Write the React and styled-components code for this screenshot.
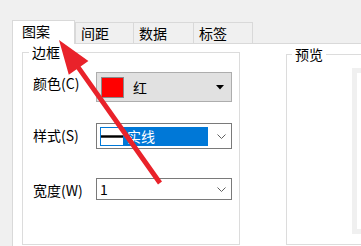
import React from 'react';
import styled, { createGlobalStyle } from 'styled-components';

// =============================================
// GLOBAL
// =============================================
const GlobalStyle = createGlobalStyle`
  html, body {
    margin: 0;
    padding: 0;
    background: #f0f0f0;
  }
  body {
    font-family: "Noto Sans CJK SC", "Liberation Sans", sans-serif;
    font-size: 14px;
    color: #000;
  }
`;

const TABS = [
  { label: '图案', width: 63, active: true },
  { label: '间距', width: 58 },
  { label: '数据', width: 60 },
  { label: '标签', width: 60, last: true },
];

const Chevron = () => (
  <svg width="9" height="5" viewBox="0 0 9 5">
    <polyline points="0.5,0.5 4.5,4.5 8.5,0.5" fill="none" stroke="#606060" strokeWidth="1" />
  </svg>
);

const DropTriangle = () => (
  <svg width="8" height="5" viewBox="0 0 8 5">
    <polygon points="0,0 8,0 4,4.5" fill="#000" />
  </svg>
);

const Arrow = () => (
  <ArrowLayer viewBox="0 0 361 246" width="361" height="246">
    <polygon
      points="59,40 88.4,60.9 80.6,66.4 162,181.6 158,184.4 76.6,69.2 68.8,74.7"
      fill="#e9222a"
    />
  </ArrowLayer>
);

const App = () => {
  return (
    <Window>
      <GlobalStyle />
      <TabStrip>
        {TABS.map((tab) => (
          <Tab key={tab.label} $w={tab.width} $active={tab.active} $last={tab.last}>
            {tab.label}
          </Tab>
        ))}
      </TabStrip>

      <Page>
        <Group $w={218} $h={200} $top={1}>
          <Legend $ml={6}>边框</Legend>
          <Form>
            <Row $mt={13}>
              <FieldLabel $pt={4}>颜色(C)</FieldLabel>
              <ColorCombo>
                <Swatch />
                <ComboText $ml={9}>红</ComboText>
                <ComboArrow $mr={7}>
                  <DropTriangle />
                </ComboArrow>
              </ColorCombo>
            </Row>

            <Row $mt={21}>
              <FieldLabel $pt={5}>样式(S)</FieldLabel>
              <Combo $h={26}>
                <Selection>
                  <LineSample>
                    <LineBar />
                  </LineSample>
                  <SelectionText>实线</SelectionText>
                </Selection>
                <ComboArrow $mr={5}>
                  <Chevron />
                </ComboArrow>
              </Combo>
            </Row>

            <Row $mt={29}>
              <FieldLabel $pt={5}>宽度(W)</FieldLabel>
              <Combo $h={22}>
                <ComboText $ml={3}>1</ComboText>
                <ComboArrow $mr={5}>
                  <Chevron />
                </ComboArrow>
              </Combo>
            </Row>
          </Form>
        </Group>

        <Group $w={140} $h={198} $top={3} $ml={46}>
          <Legend $ml={5}>预览</Legend>
          <PreviewFrame />
        </Group>
      </Page>

      <Arrow />
    </Window>
  );
};

export default App;

// =============================================
// STYLES
// =============================================
const Window = styled.div`
  position: relative;
  width: 361px;
  height: 246px;
  overflow: hidden;
  background: #f0f0f0;
  display: flex;
  flex-direction: column;
`;

const TabStrip = styled.div`
  display: flex;
  align-items: flex-end;
  height: 43px;
  padding-left: 12px;
  box-sizing: border-box;
  flex-shrink: 0;
`;

const Tab = styled.div`
  position: relative;
  z-index: ${(p) => (p.$active ? 2 : 1)};
  box-sizing: border-box;
  width: ${(p) => p.$w}px;
  height: ${(p) => (p.$active ? 24 : 21)}px;
  margin-bottom: ${(p) => (p.$active ? -1 : 0)}px;
  padding: 3px 0 0 ${(p) => (p.$active ? 9 : 5)}px;
  background: ${(p) => (p.$active ? '#fff' : '#f0f0f0')};
  border-top: 1px solid #d9d9d9;
  border-left: 1px solid #d9d9d9;
  border-right: ${(p) => (p.$active || p.$last ? '1px solid #d9d9d9' : 'none')};
  line-height: 14px;
  white-space: nowrap;
`;

const Page = styled.div`
  flex: 1;
  display: flex;
  align-items: flex-start;
  margin-left: 12px;
  padding-left: 9px;
  background: #fff;
  border-top: 1px solid #d9d9d9;
  border-left: 1px solid #d9d9d9;
  min-width: 0;
`;

const Group = styled.fieldset`
  box-sizing: border-box;
  flex-shrink: 0;
  width: ${(p) => p.$w}px;
  height: ${(p) => p.$h}px;
  margin: ${(p) => p.$top}px 0 0 ${(p) => p.$ml || 0}px;
  padding: 0;
  border: 1px solid #dcdcdc;
  min-inline-size: 0;
`;

const Legend = styled.legend`
  margin-left: ${(p) => p.$ml}px;
  padding: 0 3px;
  line-height: 14px;
  font-size: 14px;
`;

const Form = styled.div`
  padding-left: 10px;
`;

const Row = styled.div`
  display: grid;
  grid-template-columns: 63px 136px;
  align-items: start;
  margin-top: ${(p) => p.$mt}px;
`;

const FieldLabel = styled.div`
  padding-top: ${(p) => p.$pt}px;
  line-height: 14px;
  white-space: nowrap;
`;

const ColorCombo = styled.div`
  box-sizing: border-box;
  height: 30px;
  display: flex;
  align-items: center;
  padding-left: 4px;
  background: #e1e1e1;
  border: 1px solid #adadad;
`;

const Swatch = styled.div`
  box-sizing: border-box;
  width: 23px;
  height: 21px;
  background: #ff0000;
  border: 1px solid #8a8a8a;
`;

const Combo = styled.div`
  box-sizing: border-box;
  height: ${(p) => p.$h}px;
  display: flex;
  align-items: center;
  background: #fff;
  border: 1px solid #7a7a7a;
`;

const ComboText = styled.span`
  margin-left: ${(p) => p.$ml}px;
  line-height: 14px;
`;

const ComboArrow = styled.span`
  display: flex;
  margin-left: auto;
  margin-right: ${(p) => p.$mr}px;
`;

const Selection = styled.div`
  display: flex;
  align-items: center;
  width: 108px;
  height: 19px;
  margin-left: 3px;
  background: #0078d7;
`;

const LineSample = styled.div`
  display: flex;
  align-items: center;
  width: 22px;
  height: 17px;
  margin-left: 1px;
  background: #fff;
`;

const LineBar = styled.div`
  width: 100%;
  height: 3px;
  background: linear-gradient(#6a6a6a, #000 50%, #6a6a6a);
`;

const SelectionText = styled.span`
  margin-left: 4px;
  color: #fff;
  line-height: 14px;
`;

const PreviewFrame = styled.div`
  box-sizing: border-box;
  width: 100px;
  height: 166px;
  margin: 7px 0 0 65px;
  background: #fff;
  border: 5px solid #f0f0f0;
`;

const ArrowLayer = styled.svg`
  position: absolute;
  top: 0;
  left: 0;
  pointer-events: none;
  z-index: 5;
`;
